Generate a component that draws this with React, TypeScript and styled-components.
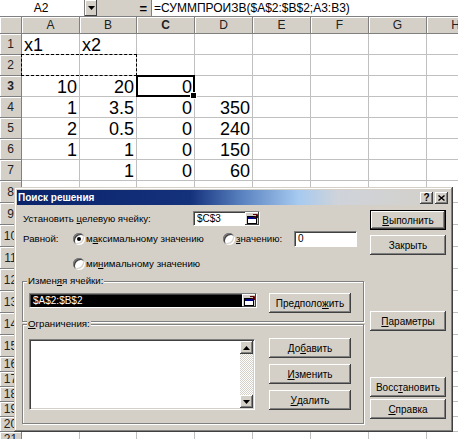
import React from "react";
import styled, { createGlobalStyle, css } from "styled-components";

const FACE = "#d4d0c8";
const SHADOW = "#808080";
const DARK = "#404040";
const GRID = "#c0c0c0";

const GlobalStyle = createGlobalStyle`
  html, body { margin: 0; padding: 0; background: #fff; }
  body { font-family: "Liberation Sans", Arial, sans-serif; overflow: hidden; }
`;

const Screen = styled.div`
  position: relative;
  width: 458px;
  height: 439px;
  overflow: hidden;
  background: #fff;
`;

/* ---------- formula bar ---------- */
const FormulaBar = styled.div`
  display: flex;
  height: 17px;
  box-sizing: border-box;
  background: ${FACE};
  border-bottom: 1px solid ${SHADOW};
  font-size: 12px;
`;
const NameBox = styled.div`
  width: 85px;
  box-sizing: border-box;
  background: #fff;
  border-right: 1px solid ${SHADOW};
  display: flex;
  align-items: center;
  justify-content: center;
  padding-right: 2px;
`;
const DropButton = styled.div`
  width: 12px;
  box-sizing: border-box;
  display: flex;
  align-items: center;
  justify-content: center;
  background: ${FACE};
  box-shadow: inset -1px -1px ${DARK}, inset 1px 1px #fff;
`;
const EqualsZone = styled.div`
  width: 50px;
  display: flex;
  align-items: center;
  justify-content: flex-end;
  padding-right: 4px;
  font-weight: 700;
  font-size: 13px;
`;
const FormulaText = styled.div`
  flex: 1;
  background: #fff;
  border-left: 1px solid ${SHADOW};
  display: flex;
  align-items: center;
  padding-left: 2px;
  white-space: nowrap;
`;

/* ---------- sheet ---------- */
const Sheet = styled.div`
  display: grid;
  grid-template-columns: 22px 58px 57px 58px 58px 58px 58px 58px 58px;
  grid-template-rows: 17px repeat(7, 21px) repeat(8, 22px) repeat(6, 15px);
`;
const HeadCell = styled.div<{ $active?: boolean }>`
  box-sizing: border-box;
  background: ${FACE};
  border-right: 1px solid ${SHADOW};
  border-bottom: 1px solid ${SHADOW};
  box-shadow: inset 1px 1px #fff;
  display: flex;
  align-items: center;
  justify-content: center;
  font-size: 12px;
  color: #222;
  font-weight: ${(p) => (p.$active ? 700 : 400)};
  overflow: hidden;
  white-space: nowrap;
`;
const Cell = styled.div<{ $left?: boolean; $sel?: boolean; $mq?: "l" | "r" }>`
  position: relative;
  box-sizing: border-box;
  border-right: 1px solid ${GRID};
  border-bottom: 1px solid ${GRID};
  display: flex;
  align-items: flex-end;
  justify-content: ${(p) => (p.$left ? "flex-start" : "flex-end")};
  padding: 0 2px;
  font-size: 18px;
  line-height: 18px;
  color: #000;
  white-space: nowrap;
  ${(p) =>
    p.$sel &&
    css`
      &::after {
        content: "";
        position: absolute;
        left: -1px;
        top: -1px;
        right: -1px;
        bottom: -1px;
        border: 2px solid #000;
        pointer-events: none;
      }
    `}
  ${(p) =>
    p.$mq &&
    css`
      &::before {
        content: "";
        position: absolute;
        top: -1px;
        bottom: -1px;
        left: ${p.$mq === "l" ? "-1px" : "0"};
        right: ${p.$mq === "r" ? "-1px" : "0"};
        border-top: 1px dashed #000;
        border-bottom: 1px dashed #000;
        ${p.$mq === "l" ? "border-left: 1px dashed #000;" : "border-right: 1px dashed #000;"}
      }
    `}
`;
const FillHandle = styled.span`
  position: absolute;
  right: -3px;
  bottom: -3px;
  width: 5px;
  height: 5px;
  background: #000;
  border: 1px solid #fff;
  box-sizing: content-box;
  z-index: 2;
`;

/* ---------- dialog ---------- */
const Dialog = styled.div`
  position: absolute;
  left: 14px;
  top: 187px;
  width: 439px;
  height: 245px;
  box-sizing: border-box;
  padding: 3px;
  background: ${FACE};
  box-shadow: inset -1px -1px ${DARK}, inset 1px 1px ${FACE}, inset -2px -2px ${SHADOW},
    inset 2px 2px #fff;
  font-size: 9.7px;
  color: #000;
  display: flex;
  flex-direction: column;
`;
const TitleBar = styled.div`
  height: 15px;
  display: flex;
  align-items: center;
  gap: 2px;
  padding: 0 2px 0 1px;
  background: linear-gradient(
    90deg,
    #0a246a 0%,
    #14317c 40%,
    #5a82c0 52%,
    #a6caf0 65%,
    #cfd3da 74%,
    #d4d0c8 100%
  );
`;
const TitleText = styled.span`
  flex: 1;
  color: #fff;
  font-weight: 700;
  font-size: 10px;
  white-space: nowrap;
`;
const TitleButton = styled.div`
  width: 13px;
  height: 12px;
  box-sizing: border-box;
  background: ${FACE};
  box-shadow: inset -1px -1px ${DARK}, inset 1px 1px #fff, inset -2px -2px ${SHADOW};
  display: flex;
  align-items: center;
  justify-content: center;
  font-weight: 700;
  font-size: 10px;
  line-height: 10px;
`;
const Body = styled.div`
  display: grid;
  grid-template-columns: 342px 76px;
  column-gap: 6px;
  padding: 5px 0 0 5px;
`;
const LeftCol = styled.div`
  display: flex;
  flex-direction: column;
`;
const RightCol = styled.div`
  display: flex;
  flex-direction: column;
`;
const FieldRow = styled.div<{ $mt?: number; $indent?: number }>`
  display: flex;
  align-items: center;
  height: 17px;
  margin-top: ${(p) => p.$mt ?? 0}px;
  padding-left: ${(p) => p.$indent ?? 0}px;
  white-space: nowrap;
`;
const Label = styled.span<{ $w?: number }>`
  box-sizing: border-box;
  width: ${(p) => (p.$w ? `${p.$w}px` : "auto")};
  padding-left: 1px;
`;
const Acc = styled.span`
  text-decoration: underline;
`;
const Field = styled.div<{ $w: number; $h: number; $dark?: boolean }>`
  width: ${(p) => p.$w}px;
  height: ${(p) => p.$h}px;
  box-sizing: border-box;
  display: flex;
  align-items: stretch;
  background: ${(p) => (p.$dark ? "#000" : "#fff")};
  color: ${(p) => (p.$dark ? "#fff" : "#000")};
  border: 1px solid;
  border-color: ${SHADOW} #fff #fff ${SHADOW};
  box-shadow: inset 1px 1px ${DARK};
  font-size: 10px;
`;
const FieldText = styled.span`
  flex: 1;
  padding-left: 3px;
  display: flex;
  align-items: center;
  white-space: nowrap;
  overflow: hidden;
`;
const CollapseBtn = styled.span`
  width: 14px;
  background: ${FACE};
  box-shadow: inset -1px -1px ${DARK}, inset 1px 1px #fff;
  display: flex;
  align-items: center;
  justify-content: center;
`;
const RadioOption = styled.span<{ $w?: number }>`
  display: flex;
  align-items: center;
  gap: 1px;
  width: ${(p) => (p.$w ? `${p.$w}px` : "auto")};
`;
const RadioDot = styled.span<{ $on?: boolean }>`
  position: relative;
  width: 12px;
  height: 12px;
  border-radius: 50%;
  background: #fff;
  box-shadow: inset 1px 1px ${SHADOW}, inset -1px -1px #fff, inset 2px 2px ${DARK},
    inset -2px -2px ${FACE};
  ${(p) =>
    p.$on &&
    css`
      &::after {
        content: "";
        position: absolute;
        left: 4px;
        top: 4px;
        width: 4px;
        height: 4px;
        border-radius: 50%;
        background: #000;
      }
    `}
`;
const Group = styled.div<{ $h: number; $mt: number; $pt: number }>`
  position: relative;
  height: ${(p) => p.$h}px;
  margin-top: ${(p) => p.$mt}px;
  box-sizing: border-box;
  border: 1px solid ${SHADOW};
  box-shadow: inset 1px 1px #fff, 1px 1px #fff;
  padding: ${(p) => p.$pt}px 0 0 6px;
  display: flex;
  align-items: flex-start;
`;
const Legend = styled.span`
  position: absolute;
  top: -7px;
  left: 4px;
  padding: 0 1px;
  background: ${FACE};
  line-height: 12px;
  white-space: nowrap;
`;
const Btn = styled.div<{ $default?: boolean; $w?: number; $h?: number; $mt?: number; $ml?: number }>`
  width: ${(p) => p.$w ?? 76}px;
  height: ${(p) => p.$h ?? 20}px;
  margin-top: ${(p) => p.$mt ?? 0}px;
  margin-left: ${(p) => p.$ml ?? 0}px;
  box-sizing: border-box;
  flex-shrink: 0;
  display: flex;
  align-items: center;
  justify-content: center;
  background: ${FACE};
  font-size: 10px;
  white-space: nowrap;
  box-shadow: ${(p) =>
    p.$default
      ? `inset 0 0 0 1px #000, inset -2px -2px ${DARK}, inset 2px 2px #fff, inset -3px -3px ${SHADOW}`
      : `inset -1px -1px ${DARK}, inset 1px 1px #fff, inset -2px -2px ${SHADOW}, inset 2px 2px ${FACE}`};
`;
const ListBox = styled.div`
  width: 226px;
  height: 71px;
  margin-top: 1px;
  box-sizing: border-box;
  display: flex;
  justify-content: flex-end;
  background: #fff;
  border: 1px solid;
  border-color: ${SHADOW} #fff #fff ${SHADOW};
  box-shadow: inset 1px 1px ${DARK}, inset -1px -1px ${FACE};
  padding: 1px;
`;
const ScrollBar = styled.div`
  width: 13px;
  display: flex;
  flex-direction: column;
`;
const ScrollArrow = styled.div`
  height: 13px;
  box-sizing: border-box;
  background: ${FACE};
  box-shadow: inset -1px -1px ${DARK}, inset 1px 1px #fff, inset -2px -2px ${SHADOW};
  display: flex;
  align-items: center;
  justify-content: center;
`;
const Track = styled.div`
  flex: 1;
  background: repeating-conic-gradient(#fff 0 25%, ${FACE} 0 50%) 0 0 / 2px 2px;
`;
const BtnStack = styled.div`
  display: flex;
  flex-direction: column;
  gap: 6px;
  margin-left: 14px;
`;

const CollapseIcon = () => (
  <svg width="11" height="10" viewBox="0 0 11 10">
    <rect x="0.5" y="2.5" width="9" height="7" fill="#fff" stroke="#000" />
    <rect x="1" y="3" width="8" height="2" fill="#000080" />
    <path d="M6 0.5 H10.5 V4" stroke="#600000" fill="none" />
    <path d="M10 1 L7 4" stroke="#600000" />
  </svg>
);

const Arrow = ({ up }: { up?: boolean }) => (
  <svg width="7" height="4" viewBox="0 0 7 4">
    <path d={up ? "M0 4 L3.5 0 L7 4 Z" : "M0 0 L7 0 L3.5 4 Z"} fill="#000" />
  </svg>
);

const colLetters = ["A", "B", "C", "D", "E", "F", "G", "H"];
const data: Record<number, string[]> = {
  1: ["x1", "x2"],
  3: ["10", "20", "0"],
  4: ["1", "3.5", "0", "350"],
  5: ["2", "0.5", "0", "240"],
  6: ["1", "1", "0", "150"],
  7: ["", "1", "0", "60"],
};

export default function App() {
  const rows = Array.from({ length: 21 }, (_, i) => i + 1);
  return (
    <Screen>
      <GlobalStyle />
      <FormulaBar>
        <NameBox>A2</NameBox>
        <DropButton>
          <Arrow />
        </DropButton>
        <EqualsZone>=</EqualsZone>
        <FormulaText>=СУММПРОИЗВ($A$2:$B$2;A3:B3)</FormulaText>
      </FormulaBar>
      <Sheet>
        <HeadCell />
        {colLetters.map((c) => (
          <HeadCell key={c} $active={c === "C"}>
            {c}
          </HeadCell>
        ))}
        {rows.map((r) => (
          <React.Fragment key={r}>
            <HeadCell $active={r === 3}>{r}</HeadCell>
            {colLetters.map((c, ci) => {
              const v = data[r]?.[ci] ?? "";
              const sel = r === 3 && ci === 2;
              const mq = r === 2 && ci === 0 ? "l" : r === 2 && ci === 1 ? "r" : undefined;
              return (
                <Cell key={c} $left={r === 1} $sel={sel} $mq={mq}>
                  {v}
                  {sel && <FillHandle />}
                </Cell>
              );
            })}
          </React.Fragment>
        ))}
      </Sheet>

      <Dialog>
        <TitleBar>
          <TitleText>Поиск решения</TitleText>
          <TitleButton>?</TitleButton>
          <TitleButton>
            <svg width="7" height="6" viewBox="0 0 7 6">
              <path d="M0.5 0.5 L6.5 5.5 M6.5 0.5 L0.5 5.5" stroke="#000" strokeWidth="1.4" />
            </svg>
          </TitleButton>
        </TitleBar>
        <Body>
          <LeftCol>
            <FieldRow>
              <Label $w={171}>
                Установить <Acc>ц</Acc>елевую ячейку:
              </Label>
              <Field $w={67} $h={15}>
                <FieldText>$C$3</FieldText>
                <CollapseBtn>
                  <CollapseIcon />
                </CollapseBtn>
              </Field>
            </FieldRow>
            <FieldRow $mt={3}>
              <Label $w={51}>Равной:</Label>
              <RadioOption $w={150}>
                <RadioDot $on />
                <span>
                  м<Acc>а</Acc>ксимальному значению
                </span>
              </RadioOption>
              <RadioOption $w={71}>
                <RadioDot />
                <span>
                  <Acc>з</Acc>начению:
                </span>
              </RadioOption>
              <Field $w={63} $h={16}>
                <FieldText>0</FieldText>
              </Field>
            </FieldRow>
            <FieldRow $mt={8} $indent={51}>
              <RadioOption>
                <RadioDot />
                <span>
                  ми<Acc>н</Acc>имальному значению
                </span>
              </RadioOption>
            </FieldRow>
            <Group $h={41} $mt={9} $pt={11}>
              <Legend>
                Измен<Acc>я</Acc>я ячейки:
              </Legend>
              <Field $w={228} $h={15} $dark>
                <FieldText>$A$2:$B$2</FieldText>
                <CollapseBtn>
                  <CollapseIcon />
                </CollapseBtn>
              </Field>
              <Btn $w={82} $ml={12}>
                Предполо<Acc>ж</Acc>ить
              </Btn>
            </Group>
            <Group $h={100} $mt={2} $pt={13}>
              <Legend>
                <Acc>О</Acc>граничения:
              </Legend>
              <ListBox>
                <ScrollBar>
                  <ScrollArrow>
                    <Arrow up />
                  </ScrollArrow>
                  <Track />
                  <ScrollArrow>
                    <Arrow />
                  </ScrollArrow>
                </ScrollBar>
              </ListBox>
              <BtnStack>
                <Btn $w={82}>
                  До<Acc>б</Acc>авить
                </Btn>
                <Btn $w={82}>
                  <Acc>И</Acc>зменить
                </Btn>
                <Btn $w={82}>
                  <Acc>У</Acc>далить
                </Btn>
              </BtnStack>
            </Group>
          </LeftCol>
          <RightCol>
            <Btn $default>
              <Acc>В</Acc>ыполнить
            </Btn>
            <Btn $mt={5}>Закрыть</Btn>
            <Btn $mt={56}>
              <Acc>П</Acc>араметры
            </Btn>
            <Btn $mt={46}>
              Восс<Acc>т</Acc>ановить
            </Btn>
            <Btn $mt={2}>
              <Acc>С</Acc>правка
            </Btn>
          </RightCol>
        </Body>
      </Dialog>
    </Screen>
  );
}
